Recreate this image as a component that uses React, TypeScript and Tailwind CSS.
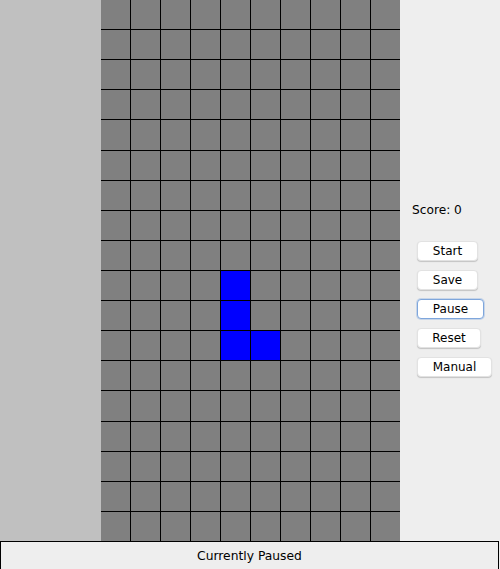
import React from 'react';

const ROWS = 18;
const COLS = 10;

// the falling L piece, as [row, col]
const piece: Array<[number, number]> = [
  [9, 4],
  [10, 4],
  [11, 4],
  [11, 5],
];

const buttons = [
  { label: 'Start', w: 'w-[61px]' },
  { label: 'Save', w: 'w-[61px]' },
  { label: 'Pause', w: 'w-[67px]', focused: true },
  { label: 'Reset', w: 'w-[64px]' },
  { label: 'Manual', w: 'w-[75px]' },
];

function Board() {
  const cells = [];
  for (let r = 0; r < ROWS; r++) {
    for (let c = 0; c < COLS; c++) {
      const filled = piece.some(([pr, pc]) => pr === r && pc === c);
      cells.push(
        <div key={`${r}-${c}`} className={filled ? 'bg-[#0000ff]' : 'bg-[#808080]'} />
      );
    }
  }
  return (
    <div className="grid h-full w-[299px] grid-cols-[repeat(10,29px)] grid-rows-[repeat(18,1fr)] gap-px bg-black">
      {cells}
    </div>
  );
}

export default function App() {
  return (
    <div className="flex h-[569px] w-[500px] flex-col bg-[#eeeeee] font-['DejaVu_Sans',Verdana,sans-serif] text-black">
      <div className="flex h-[541px]">
        <div className="w-[101px] bg-[#c0c0c0]" />
        <Board />
        <div className="flex flex-1 flex-col pl-[12px] pt-[203px]">
          <div className="text-[12.2px] leading-[15px]">Score: 0</div>
          <div className="mt-[23px] flex flex-col gap-[9px] pl-[5px]">
            {buttons.map((b) => (
              <button
                key={b.label}
                className={`${b.w} h-[20px] rounded-[4px] bg-white text-[12px] leading-[18px] ${
                  b.focused
                    ? 'border border-[#7ea6dc] shadow-[0_0_0_1px_rgba(126,166,220,0.35)]'
                    : 'border border-[#e2e2e2] shadow-[0_1px_1px_rgba(0,0,0,0.18)]'
                }`}
              >
                {b.label}
              </button>
            ))}
          </div>
        </div>
      </div>
      <div className="mr-px flex h-[28px] items-center justify-center border border-b-0 border-black bg-[#eeeeee] pt-[2px] text-[12.3px]">
        Currently Paused
      </div>
    </div>
  );
}
